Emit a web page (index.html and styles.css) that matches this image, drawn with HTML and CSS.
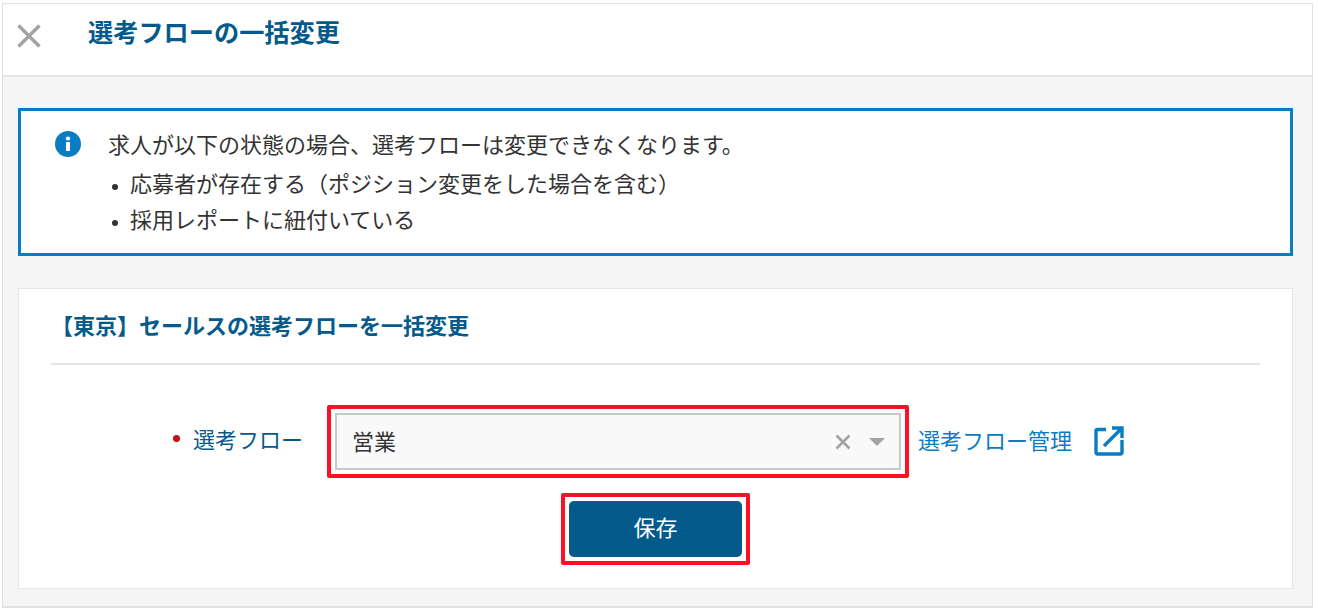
FILE: index.html
```html
<!DOCTYPE html>
<html lang="ja">
<head>
<meta charset="utf-8">
<title>選考フローの一括変更</title>
<link rel="stylesheet" href="styles.css">
</head>
<body>
<div class="frame">
  <header class="header">
    <svg class="close-icon" viewBox="0 0 24 24" aria-hidden="true"><path d="M1.500 1.500 22.500 22.500M22.500 1.500 1.500 22.500"/></svg>
    <h1 class="page-title">選考フローの一括変更</h1>
  </header>
  <main class="content">
    <section class="notice">
      <svg class="info-icon" viewBox="0 0 26 26" aria-hidden="true"><circle cx="13" cy="13" r="13" fill="#0a7cc4"/><rect x="11" y="11" width="4" height="9" rx=".5" fill="#fff"/><circle cx="13" cy="7.500" r="2.100" fill="#fff"/></svg>
      <div class="notice-body">
        <p class="notice-text">求人が以下の状態の場合、選考フローは変更できなくなります。</p>
        <ul class="notice-list">
          <li>応募者が存在する（ポジション変更をした場合を含む）</li>
          <li>採用レポートに紐付いている</li>
        </ul>
      </div>
    </section>
    <section class="card">
      <h2 class="card-title">【東京】セールスの選考フローを一括変更</h2>
      <form class="form">
        <div class="form-row">
          <div class="label"><span class="dot"></span>選考フロー</div>
          <div class="mark">
            <div class="select">
              <span class="select-value">営業</span>
              <svg class="clear-icon" viewBox="0 0 16 16" aria-hidden="true"><path d="M1.500 1.500 14.500 14.500M14.500 1.500 1.500 14.500"/></svg>
              <span class="caret"></span>
            </div>
          </div>
          <a class="manage-link" href="#">選考フロー管理</a>
          <svg class="external-icon" viewBox="0 0 30 30" aria-hidden="true"><path d="M12 3.500H3.500a1.500 1.500 0 0 0-1.500 1.500V26.500a1.500 1.500 0 0 0 1.500 1.500H26.500a1.500 1.500 0 0 0 1.500-1.500V14M10 20 27 3M18 2H28V12"/></svg>
        </div>
        <div class="mark mark-button">
          <button class="save" type="button">保存</button>
        </div>
      </form>
    </section>
  </main>
</div>
</body>
</html>
```
FILE: styles.css
```css
* { box-sizing: border-box; }
html, body { margin: 0; padding: 0; background: #fff; }
body {
  width: 1318px;
  height: 612px;
  overflow: hidden;
  padding: 3px 5px 4px 2px;
  font-family: "Noto Sans CJK JP", "Noto Sans", sans-serif;
  color: #333;
}
.frame {
  height: 605px;
  border: 1px solid #e2e2e2;
  border-width: 1px 1px 2px 1px;
  background: #f5f5f5;
  display: flex;
  flex-direction: column;
}
.header {
  height: 73px;
  flex: none;
  background: #fff;
  border-bottom: 2px solid #e6e6e6;
  display: flex;
  align-items: center;
  padding: 0 0 12px 14px;
}
.close-icon {
  width: 24px;
  height: 24px;
  margin-top: 5px;
  fill: none;
  stroke: #a3a3a3;
  stroke-width: 3.4;
}
.page-title {
  margin: -5px 0 0 47px;
  font-size: 25.2px;
  line-height: 34px;
  font-weight: 700;
  color: #055a8c;
}
.content {
  flex: 1;
  padding: 31px 19px 0 15px;
  display: flex;
  flex-direction: column;
  gap: 32px;
}
.notice {
  height: 148px;
  flex: none;
  background: #fff;
  border: 3px solid #0a7cc4;
  display: flex;
  padding: 20px 0 0 34px;
}
.info-icon {
  width: 26px;
  height: 26px;
  flex: none;
}
.notice-body { margin-left: 27px; }
.notice-text {
  margin: -7px 0 0;
  font-size: 22px;
  line-height: 38px;
}
.notice-list {
  list-style: none;
  margin: 2px 0 0;
  padding: 0 0 0 4px;
  font-size: 22px;
  line-height: 36px;
}
.notice-list li {
  display: flex;
  align-items: center;
  gap: 12px;
}
.notice-list li::before {
  content: "";
  width: 6px;
  height: 6px;
  margin-top: 10px;
  border-radius: 50%;
  background: #333;
}
.card {
  height: 301px;
  flex: none;
  background: #fff;
  border: 1px solid #e6e6e6;
  padding: 0 32px;
}
.card-title {
  margin: 0;
  height: 76px;
  line-height: 70px;
  font-size: 22px;
  font-weight: 700;
  color: #055a8c;
  border-bottom: 2px solid #e6e6e6;
}
.form {
  display: flex;
  flex-direction: column;
  align-items: center;
  padding-top: 40px;
  gap: 15px;
}
.form-row {
  width: 100%;
  display: flex;
  align-items: center;
}
.label {
  display: flex;
  align-items: center;
  margin-left: 122px;
  width: 154px;
  font-size: 22px;
  line-height: 30px;
  color: #055a8c;
  margin-top: -7px;
}
.dot {
  width: 7px;
  height: 7px;
  border-radius: 50%;
  background: #cc0f14;
  margin-right: 13px;
}
.mark {
  border: 4px solid #ff0f23;
  border-radius: 2px;
  padding: 4px;
  background: #fff;
}
.select {
  width: 566px;
  height: 57px;
  background: #f9f9f9;
  border: 2px solid #c8c8c8;
  display: flex;
  align-items: center;
  padding: 0 14px 0 15px;
}
.select-value {
  flex: 1;
  font-size: 22px;
  line-height: 30px;
  color: #333;
  margin-top: -4px;
}
.clear-icon {
  width: 16px;
  height: 16px;
  fill: none;
  stroke: #a3a3a3;
  stroke-width: 2.6;
}
.caret {
  width: 0;
  height: 0;
  margin-left: 18px;
  border-style: solid;
  border-width: 8px 8px 0;
  border-color: #a3a3a3 transparent transparent;
}
.manage-link {
  margin-left: 9px;
  font-size: 22px;
  line-height: 30px;
  color: #0a7cc4;
  text-decoration: none;
  margin-top: -6px;
}
.external-icon {
  width: 30px;
  height: 30px;
  margin-left: 22px;
  fill: none;
  stroke: #0a7cc4;
  stroke-width: 3.4;
  margin-top: -1px;
}
.mark-button { flex: none; }
.save {
  display: block;
  width: 173px;
  height: 56px;
  border: 0;
  border-radius: 5px;
  background: #055a8c;
  color: #fff;
  font-family: inherit;
  font-size: 22px;
  padding: 0 0 6px;
}
```
